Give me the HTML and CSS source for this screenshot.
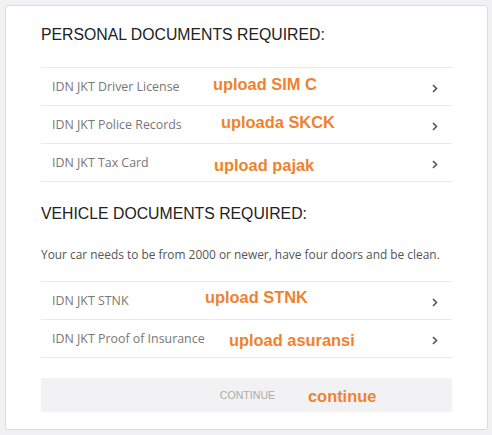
FILE: index.html
```html
<!DOCTYPE html>
<html lang="en">
  <head>
    <meta charset="UTF-8" />
    <meta name="viewport" content="width=device-width, initial-scale=1.0" />
    <title>Documents Required</title>
    <link rel="stylesheet" href="styles.css">
  </head>
  <body>
    <div class="card">
      <h2 class="title">PERSONAL DOCUMENTS REQUIRED:</h2>
      <ul class="docs">
        <li class="doc">
          <span class="doc-name">IDN JKT Driver License</span>
          <span class="note note-sim">upload SIM C</span>
          <svg class="chevron" width="6" height="9" viewBox="0 0 6 9"><path d="M1 1l3.5 3.5L1 8" fill="none" stroke="#555" stroke-width="1.6"/></svg>
        </li>
        <li class="doc">
          <span class="doc-name">IDN JKT Police Records</span>
          <span class="note note-skck">uploada SKCK</span>
          <svg class="chevron" width="6" height="9" viewBox="0 0 6 9"><path d="M1 1l3.5 3.5L1 8" fill="none" stroke="#555" stroke-width="1.6"/></svg>
        </li>
        <li class="doc">
          <span class="doc-name">IDN JKT Tax Card</span>
          <span class="note note-pajak">upload pajak</span>
          <svg class="chevron" width="6" height="9" viewBox="0 0 6 9"><path d="M1 1l3.5 3.5L1 8" fill="none" stroke="#555" stroke-width="1.6"/></svg>
        </li>
      </ul>

      <h2 class="title title-vehicle">VEHICLE DOCUMENTS REQUIRED:</h2>
      <p class="hint">Your car needs to be from 2000 or newer, have four doors and be clean.</p>
      <ul class="docs">
        <li class="doc">
          <span class="doc-name">IDN JKT STNK</span>
          <span class="note note-stnk">upload STNK</span>
          <svg class="chevron" width="6" height="9" viewBox="0 0 6 9"><path d="M1 1l3.5 3.5L1 8" fill="none" stroke="#555" stroke-width="1.6"/></svg>
        </li>
        <li class="doc">
          <span class="doc-name">IDN JKT Proof of Insurance</span>
          <span class="note note-asuransi">upload asuransi</span>
          <svg class="chevron" width="6" height="9" viewBox="0 0 6 9"><path d="M1 1l3.5 3.5L1 8" fill="none" stroke="#555" stroke-width="1.6"/></svg>
        </li>
      </ul>

      <button class="continue">
        CONTINUE
        <span class="note note-continue">continue</span>
      </button>
    </div>
  </body>
</html>
```

FILE: styles.css
```css
* {
  margin: 0;
  padding: 0;
  box-sizing: border-box;
}
body {
  background-color: #f1f1f3;
  font-family: "Open Sans", sans-serif;
}
.card {
  margin: 5px;
  width: 483px;
  height: 425px;
  background-color: #fff;
  border: 1px solid #dcdcdf;
  border-radius: 3px;
  padding: 20px 35px 18px 35px;
}
.title {
  font-family: "Liberation Sans", Arial, sans-serif;
  font-weight: normal;
  font-size: 15.8px;
  line-height: 18px;
  color: #222;
  margin-bottom: 23px;
}
.title-vehicle {
  margin-top: 23px;
}
.hint {
  font-size: 11.9px;
  line-height: 17px;
  color: #555;
  white-space: nowrap;
  margin-top: 22px;
  margin-bottom: 18px;
}
.docs {
  list-style: none;
  border-top: 1px solid #e9e9eb;
}
.doc {
  position: relative;
  height: 38px;
  border-bottom: 1px solid #e9e9eb;
  display: flex;
  align-items: center;
  justify-content: space-between;
  padding: 0 14px 0 11px;
}
.doc-name {
  font-size: 12.4px;
  color: #777;
}
.chevron {
  display: block;
  margin-top: 4px;
}

/* hand-placed annotations */
.note {
  position: absolute;
  font-family: "Liberation Sans", Arial, sans-serif;
  font-weight: bold;
  font-size: 16.4px;
  line-height: 18px;
  color: #f0822f;
}
.note-sim { left: 172px; top: 7px; }
.note-skck { left: 180px; top: 7px; }
.note-pajak { left: 173px; top: 12px; }
.note-stnk { left: 164px; top: 6px; }
.note-asuransi { left: 188px; top: 11px; }
.note-continue { left: 267px; top: 9px; }

.continue {
  position: relative;
  display: block;
  width: 100%;
  height: 34px;
  margin-top: 20px;
  border: none;
  border-radius: 2px;
  background-color: #f2f2f4;
  font-family: "Liberation Sans", Arial, sans-serif;
  font-size: 10.6px;
  color: #aaa;
  padding-left: 2px;
}
```
